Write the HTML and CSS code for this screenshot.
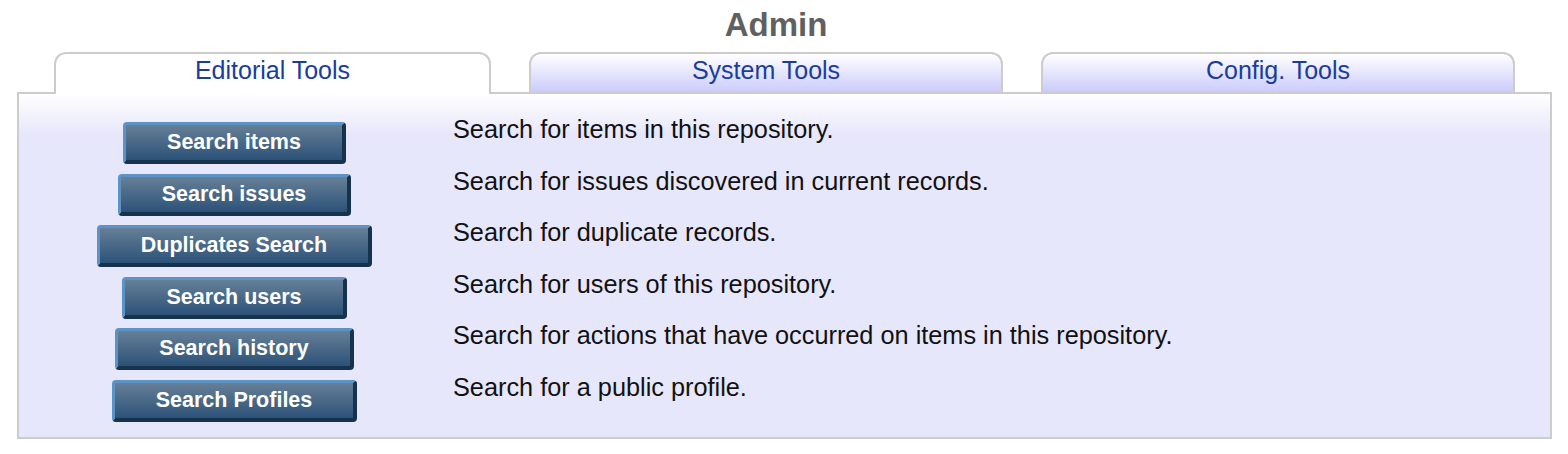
FILE: index.html
```html
<!DOCTYPE html>
<html>
<head>
    <link rel="stylesheet" href="styles.css">
</head>
<body>
    <h1 class="title">Admin</h1>
    <div class="tabs">
        <div class="tab active">Editorial Tools</div>
        <div class="tab">System Tools</div>
        <div class="tab">Config. Tools</div>
    </div>
    <div class="panel">
        <div class="rows">
            <div class="cell-btn"><button class="btn">Search items</button></div>
            <div class="desc">Search for items in this repository.</div>

            <div class="cell-btn"><button class="btn">Search issues</button></div>
            <div class="desc">Search for issues discovered in current records.</div>

            <div class="cell-btn"><button class="btn">Duplicates Search</button></div>
            <div class="desc">Search for duplicate records.</div>

            <div class="cell-btn"><button class="btn">Search users</button></div>
            <div class="desc">Search for users of this repository.</div>

            <div class="cell-btn"><button class="btn">Search history</button></div>
            <div class="desc">Search for actions that have occurred on items in this repository.</div>

            <div class="cell-btn"><button class="btn">Search Profiles</button></div>
            <div class="desc">Search for a public profile.</div>
        </div>
    </div>
</body>
</html>
```

FILE: styles.css
```css
body {
    margin: 0;
    padding: 6px 16px 0 17px;
    font-family: "Liberation Sans", Arial, sans-serif;
    background-color: #fff;
}

.title {
    font-size: 33px;
    line-height: 38px;
    margin: 0 0 8px;
    padding-right: 17px;
    text-align: center;
    color: #606060;
}

.tabs {
    display: flex;
    gap: 38px;
    padding: 0 37px;
    height: 42px;
    margin-bottom: -2px;
    position: relative;
    z-index: 1;
}

.tab {
    flex: 1;
    height: 40px;
    box-sizing: border-box;
    border: 2px solid #ccc;
    border-bottom: none;
    border-radius: 12px 12px 0 0;
    background: linear-gradient(#fff, #cbcbfb);
    text-align: center;
    font-size: 25px;
    line-height: 29px;
    padding-top: 2px;
    color: #1a3c9e;
}

.tab.active {
    flex: none;
    width: 437px;
    height: 42px;
    background: #fff;
}

.panel {
    border: 2px solid #ccc;
    background: linear-gradient(#fff 0, #e7e7fb 40px);
    padding: 21px 0 13px;
}

.rows {
    display: grid;
    grid-template-columns: 431px 1fr;
    grid-auto-rows: 51.5px;
}

.cell-btn {
    display: flex;
    justify-content: center;
    align-items: flex-start;
    padding-top: 7px;
}

.btn {
    font-family: "Liberation Sans", Arial, sans-serif;
    font-weight: bold;
    font-size: 21.5px;
    line-height: 25px;
    color: #fff;
    padding: 5px 41px;
    border-top: 3px solid #5b93c4;
    border-left: 3px solid #5b93c4;
    border-right: 4px solid #17324d;
    border-bottom: 4px solid #17324d;
    border-radius: 4px;
    background: linear-gradient(#667f97, #2c5278);
    cursor: pointer;
}

.desc {
    padding-left: 3px;
    font-size: 25.3px;
    line-height: 29px;
    color: #111;
}
```
